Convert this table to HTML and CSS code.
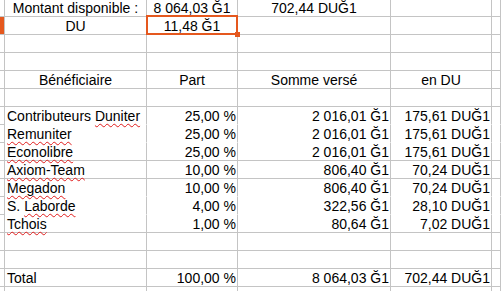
FILE: index.html
```html
<!DOCTYPE html>
<html lang="fr">
<head>
<meta charset="utf-8">
<title>Répartition</title>
<link rel="stylesheet" href="styles.css">
</head>
<body>
<div class="sheet">
  <div class="rh"></div><div class="c ctr">Montant disponible :</div><div class="c ctr">8 064,03 Ğ1</div><div class="c ctr">702,44 DUĞ1</div><div class="c"></div><div class="c"></div>
  <div class="rh rh-sel"></div><div class="c ctr">DU</div><div class="c ctr cur">11,48 Ğ1<span class="selbox"><span class="handle"></span></span></div><div class="c"></div><div class="c"></div><div class="c"></div>
  <div class="rh"></div><div class="c"></div><div class="c"></div><div class="c"></div><div class="c"></div><div class="c"></div>
  <div class="rh"></div><div class="c"></div><div class="c"></div><div class="c"></div><div class="c"></div><div class="c"></div>
  <div class="rh"></div><div class="c ctr">Bénéficiaire</div><div class="c ctr">Part</div><div class="c ctr">Somme versé</div><div class="c ctr">en DU</div><div class="c"></div>
  <div class="rh"></div><div class="c"></div><div class="c"></div><div class="c"></div><div class="c"></div><div class="c"></div>

  <div class="rh"></div><div class="c l nb">Contributeurs <span class="sp">Duniter</span></div><div class="c r nb">25,00 %</div><div class="c r nb">2 016,01 Ğ1</div><div class="c r nb">175,61 DUĞ1</div><div class="c nb"></div>
  <div class="rh"></div><div class="c l nb"><span class="sp">Remuniter</span></div><div class="c r nb">25,00 %</div><div class="c r nb">2 016,01 Ğ1</div><div class="c r nb">175,61 DUĞ1</div><div class="c nb"></div>
  <div class="rh"></div><div class="c l"><span class="sp">Econolibre</span></div><div class="c r">25,00 %</div><div class="c r">2 016,01 Ğ1</div><div class="c r">175,61 DUĞ1</div><div class="c"></div>
  <div class="rh"></div><div class="c l"><span class="sp">Axiom-Team</span></div><div class="c r">10,00 %</div><div class="c r">806,40 Ğ1</div><div class="c r">70,24 DUĞ1</div><div class="c"></div>
  <div class="rh"></div><div class="c l nb"><span class="sp">Megadon</span></div><div class="c r nb">10,00 %</div><div class="c r nb">806,40 Ğ1</div><div class="c r nb">70,24 DUĞ1</div><div class="c nb"></div>
  <div class="rh"></div><div class="c l nb">S. <span class="sp">Laborde</span></div><div class="c r nb">4,00 %</div><div class="c r nb">322,56 Ğ1</div><div class="c r nb">28,10 DUĞ1</div><div class="c nb"></div>
  <div class="rh"></div><div class="c l"><span class="sp">Tchois</span></div><div class="c r">1,00 %</div><div class="c r">80,64 Ğ1</div><div class="c r">7,02 DUĞ1</div><div class="c"></div>

  <div class="rh"></div><div class="c"></div><div class="c"></div><div class="c"></div><div class="c"></div><div class="c"></div>
  <div class="rh"></div><div class="c"></div><div class="c"></div><div class="c"></div><div class="c"></div><div class="c"></div>
  <div class="rh"></div><div class="c l">Total</div><div class="c r">100,00 %</div><div class="c r">8 064,03 Ğ1</div><div class="c r">702,44 DUĞ1</div><div class="c"></div>
  <div class="rh"></div><div class="c"></div><div class="c"></div><div class="c"></div><div class="c"></div><div class="c"></div>
</div>
</body>
</html>
```

FILE: styles.css
```css
html, body {
  margin: 0;
  padding: 0;
  background: #ffffff;
  overflow: hidden;
}

.sheet {
  display: grid;
  grid-template-columns: 5px 142px 91px 153px 101px 1fr;
  grid-auto-rows: 18px;
  margin-top: -1px;
  font-family: "Liberation Sans", Arial, sans-serif;
  font-size: 14px;
  color: #000000;
}

.rh,
.c {
  box-sizing: border-box;
  border-right: 1px solid #c4c4c4;
  border-bottom: 1px solid #c4c4c4;
}

.c.nb {
  border-bottom-color: #ffffff;
}

.rh-sel {
  background: #e5581e;
}

.c {
  padding: 1px 2px 0 2px;
  line-height: 17px;
  white-space: nowrap;
  overflow: visible;
}

.ctr { text-align: center; }
.l { text-align: left; }
.r { text-align: right; padding-right: 1px; }

.sp {
  text-decoration: underline wavy #e01b1b;
  text-decoration-thickness: 1px;
  text-underline-offset: 2px;
  text-decoration-skip-ink: none;
}

.cur {
  position: relative;
}

.selbox {
  position: absolute;
  left: -1px;
  top: -2px;
  right: -1px;
  bottom: -1px;
  border: 2px solid #e5581e;
  pointer-events: none;
}

.handle {
  position: absolute;
  right: -4px;
  bottom: -4px;
  width: 5px;
  height: 5px;
  background: #e5581e;
}
```
